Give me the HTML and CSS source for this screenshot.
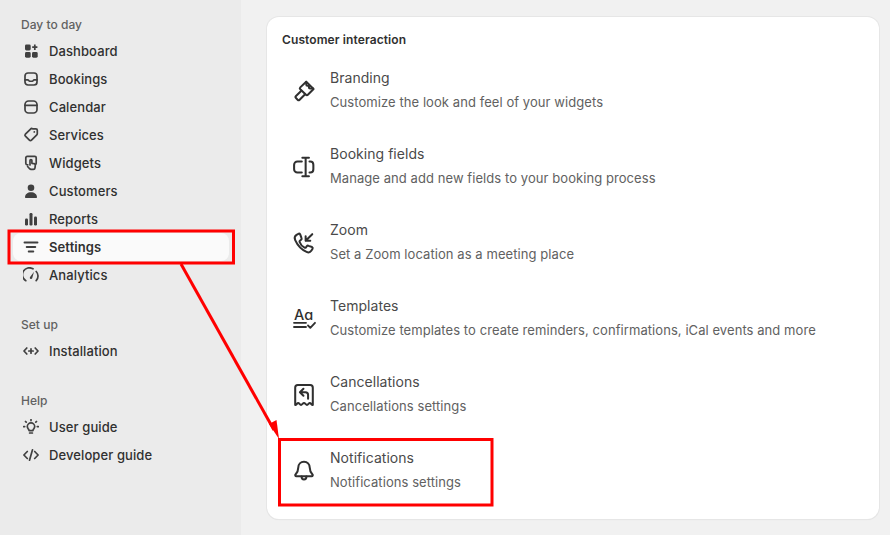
FILE: index.html
```html
<!DOCTYPE html>
<html lang="en">
<head>
<meta charset="utf-8">
<title>Settings</title>
<link rel="stylesheet" href="styles.css">
</head>
<body>
<div class="app">
  <aside class="sidebar">
    <section class="group">
      <h2 class="group-title">Day to day</h2>
      <a class="nav-item"><svg class="nav-icon" viewBox="0 0 16 16"><rect x="2" y="1.500" width="5.700" height="6" rx="1.400" fill="currentColor"/><rect x="2" y="9" width="5.700" height="5.700" rx="1.400" fill="currentColor"/><rect x="9" y="9" width="5.700" height="5.700" rx="1.400" fill="currentColor"/><path d="M11.800 1.500v5.500M9.200 4.200h5.200" stroke="currentColor" stroke-width="1.700" fill="none"/></svg>Dashboard</a>
      <a class="nav-item"><svg class="nav-icon" viewBox="0 0 16 16"><rect x="2" y="2" width="12" height="12" rx="3" class="line"/><path d="M2 8.800h2.800c.6 0 1 .9 1.400 1.200.5.300 3.100.3 3.600 0 .4-.3.800-1.200 1.400-1.200H14" class="line"/></svg>Bookings</a>
      <a class="nav-item"><svg class="nav-icon" viewBox="0 0 16 16"><rect x="2" y="2" width="12" height="12" rx="3.600" class="line"/><path d="M2 6.300h12" class="line"/></svg>Calendar</a>
      <a class="nav-item"><svg class="nav-icon" viewBox="0 0 16 16"><path d="M9.500 1.800h3.400c.8 0 1.400.6 1.400 1.400v3.400c0 .5-.2.900-.5 1.200l-5.300 5.400c-.6.600-1.500.6-2.100 0l-4-4c-.6-.6-.6-1.500 0-2.100l5.400-5.300c.3-.3.300-.4.700-.4z" class="line"/><circle cx="11.300" cy="4.900" r=".9" fill="currentColor"/></svg>Services</a>
      <a class="nav-item"><svg class="nav-icon" viewBox="0 0 16 16"><path d="M4.800 9.800H4.300c-.9 0-1.500-.6-1.500-1.500V2.800c0-.8.600-1.400 1.400-1.400h7.600c.8 0 1.400.6 1.400 1.400v5.500c0 .5-.2.800-.5 1" class="line"/><path d="M7 10V5.500c0-1.200 1.900-1.200 1.900 0v2.800l2.200.4c.9.200 1.300.8 1.200 1.600l-.3 2.500c-.1.800-.8 1.500-1.600 1.500H8c-.6 0-1-.2-1.400-.6l-2-2.200" class="line"/></svg>Widgets</a>
      <a class="nav-item"><svg class="nav-icon" viewBox="0 0 16 16"><circle cx="8" cy="4.800" r="3.300" fill="currentColor"/><path d="M2 14.300c0-3 2.600-5 6-5s6 2 6 5c0 .4-.3.700-.7.700H2.700c-.4 0-.7-.3-.7-.7z" fill="currentColor"/></svg>Customers</a>
      <a class="nav-item"><svg class="nav-icon" viewBox="0 0 16 16"><rect x="2" y="7.500" width="3" height="7" rx="1.200" fill="currentColor"/><rect x="6.500" y="2" width="3" height="12.500" rx="1.200" fill="currentColor"/><rect x="11" y="5.500" width="3" height="9" rx="1.200" fill="currentColor"/></svg>Reports</a>
      <a class="nav-item is-active"><svg class="nav-icon" viewBox="0 0 16 16"><path d="M1.500 3.500h13M3.700 8h8.600M5.700 12.500h4.600" class="line thick"/></svg>Settings</a>
      <a class="nav-item"><svg class="nav-icon" viewBox="0 0 16 16"><path d="M2.800 13.700A6.700 6.700 0 0 1 10 1.800M13.200 4.500a6.700 6.700 0 0 1 0 9.200" class="line"/><path d="M6.900 10.300 11 4.700 9.200 11.200a1.200 1.200 0 0 1-2.300-.9z" fill="currentColor"/></svg>Analytics</a>
    </section>
    <section class="group">
      <h2 class="group-title">Set up</h2>
      <a class="nav-item"><svg class="nav-icon" viewBox="0 0 16 16"><path d="M3.800 5 1 8l2.800 3M12.200 5 15 8l-2.800 3M8 5.800v4.400M5.800 8h4.400" class="line"/></svg>Installation</a>
    </section>
    <section class="group">
      <h2 class="group-title">Help</h2>
      <a class="nav-item"><svg class="nav-icon" viewBox="0 0 16 16"><path d="M6.100 11.600c-.1-1-.4-1.400-1-2-.5-.6-.8-1.200-.8-2a3.700 3.700 0 0 1 7.400 0c0 .8-.3 1.400-.8 2-.6.600-.9 1-1 2z" class="line"/><path d="M6.600 14h2.800M8 .6v1M2.500 2.500l.7.700M13.500 2.500l-.7.700M.7 7.600h1M14.300 7.600h1" class="line"/></svg>User guide</a>
      <a class="nav-item"><svg class="nav-icon" viewBox="0 0 16 16"><path d="M4.300 4.500.9 8l3.400 3.500M11.700 4.500 15.100 8l-3.400 3.500M9.500 2.800 6.500 13.200" class="line"/></svg>Developer guide</a>
    </section>
  </aside>

  <main class="content">
    <div class="card">
      <h1 class="card-title">Customer interaction</h1>
      <a class="row">
        <svg class="row-icon" viewBox="0 0 20 20"><path d="M12 1.500 18.700 8.200 13.500 13.400c-.5.500-1.200.5-1.700 0L6.600 8.400c-.5-.5-.5-1.200 0-1.700z" class="line"/><path d="M12 1.800 12.100 4.300c0 .6.400 1 1 1h1.400v1.500c0 .6.400 1 1 1h2.700" class="line"/><path d="M7.600 9.700 2.500 14.800c-.4.400-.4 1 0 1.400l1.900 1.900c.4.400 1 .4 1.400 0l5-5" class="line"/></svg>
        <div class="row-text"><div class="row-name">Branding</div><div class="row-desc">Customize the look and feel of your widgets</div></div>
      </a>
      <a class="row">
        <svg class="row-icon" viewBox="0 0 20 20"><path d="M8 5H4a3 3 0 0 0-3 3v4a3 3 0 0 0 3 3h4M15 5h.7c1.700 0 2.800 1.300 2.800 3v4c0 1.700-1.100 3-2.800 3H15" class="line"/><path d="M8.500 1.500h6M8.500 18.500h6M11.500 1.500v17" class="line"/></svg>
        <div class="row-text"><div class="row-name">Booking fields</div><div class="row-desc">Manage and add new fields to your booking process</div></div>
      </a>
      <a class="row">
        <svg class="row-icon" viewBox="0 0 20 20"><path d="M4.800 1.700 2.900 2.900C1.500 3.900 1.300 5.800 2 7.400c2 4.500 5.700 8.600 10.300 10.700 1.500.7 3.400.4 4.300-1l1.100-1.700c.4-.6.200-1.300-.4-1.700L14.200 12.600c-.6-.3-1.200-.2-1.600.3l-.8 1c-.3.400-.8.500-1.300.3-1.600-.8-3.900-3.400-4.500-5.100-.2-.5 0-1 .4-1.300l1-.8c.5-.4.600-1 .3-1.600L6.500 2.100c-.4-.6-1.100-.8-1.700-.4z" class="line"/><path d="M17.500 2 11.500 8M11.500 3.800V8h4.200" class="line"/></svg>
        <div class="row-text"><div class="row-name">Zoom</div><div class="row-desc">Set a Zoom location as a meeting place</div></div>
      </a>
      <a class="row">
        <svg class="row-icon templates" viewBox="0 0 22 22"><text x="1" y="12" class="aa">Aɑ</text><path d="M1 14.800h12M1 19h12" class="line"/><path d="M15 17.500l2.300 2.300 4.700-5" class="line"/></svg>
        <div class="row-text"><div class="row-name">Templates</div><div class="row-desc">Customize templates to create reminders, confirmations, iCal events and more</div></div>
      </a>
      <a class="row">
        <svg class="row-icon" viewBox="0 0 20 20"><path d="M2 19V3.300C2 1.900 3 1 4.300 1h11.400C17 1 18 1.900 18 3.300V19c-.9.500-1.700-1.800-2.700-1.800-1 0-1.500 1.800-2.600 1.800-1 0-1.700-1.800-2.700-1.800s-1.700 1.800-2.700 1.800c-1.100 0-1.600-1.800-2.600-1.800-1 0-1.800 2.300-2.700 1.800z" class="line"/><path d="M9.500 4.300 6.300 7.500l3.200 3.200M6.500 7.500h4.800c1.600 0 2.400.9 2.400 2.300v3.700" class="line"/></svg>
        <div class="row-text"><div class="row-name">Cancellations</div><div class="row-desc">Cancellations settings</div></div>
      </a>
      <a class="row">
        <svg class="row-icon" viewBox="0 0 20 20"><path d="M10 1.500c-3 0-5.200 2.300-5.200 5.400 0 2.900-.7 4.300-2.500 6.300-.6.700-.2 1.600.7 1.600h14c.9 0 1.300-.9.700-1.600-1.800-2-2.500-3.400-2.500-6.300 0-3.100-2.200-5.400-5.200-5.400z" class="line"/><path d="M7.800 15c0 1.600 1 2.800 2.200 2.800s2.200-1.200 2.200-2.800" class="line"/></svg>
        <div class="row-text"><div class="row-name">Notifications</div><div class="row-desc">Notifications settings</div></div>
      </a>
    </div>
  </main>
</div>

<svg class="annotations" width="890" height="535" viewBox="0 0 890 535">
  <rect x="9" y="231" width="224.500" height="32" class="mark"/>
  <rect x="279.500" y="439.500" width="212.500" height="65.500" class="mark"/>
  <path d="M181 264 274 430" class="mark"/>
  <path d="M279 439 269 424 276.500 420z" class="mark-head"/>
</svg>
</body>
</html>
```
FILE: styles.css
```css
* { box-sizing: border-box; }
html, body { margin: 0; height: 100%; }
body {
  font-family: Inter, "Liberation Sans", sans-serif;
  color: #303030;
  background: #f1f1f1;
  overflow: hidden;
}
.app { display: flex; width: 890px; height: 535px; }
.sidebar {
  width: 241px;
  flex: none;
  background: #ebebeb;
  padding: 15px 12px 0 13px;
}
.group { margin-bottom: 26px; }
.group-title {
  margin: 0 0 2px 8px;
  height: 20px;
  font-size: 12px;
  line-height: 20px;
  font-weight: 500;
  letter-spacing: .03px;
  color: #616161;
}
.nav-item {
  display: flex;
  align-items: center;
  gap: 10px;
  height: 28px;
  padding-left: 10px;
  font-size: 13px;
  font-weight: 500;
  letter-spacing: .1px;
  color: #303030;
  border-radius: 8px;
}
.nav-item.is-active { background: #fafafa; font-weight: 600; }
.nav-icon { width: 16px; height: 16px; flex: none; color: #404040; }
.line {
  fill: none;
  stroke: currentColor;
  stroke-width: 1.700;
  stroke-linecap: round;
  stroke-linejoin: round;
}
.line.thick { stroke-width: 1.900; }
.content { flex: 1; padding: 17px 11px 0 26px; }
.card {
  height: 502px;
  background: #fff;
  border-radius: 12px;
  box-shadow: 0 0 0 1px #e6e6e6, 0 1px 1px rgba(0, 0, 0, .08);
  padding: 15px 14px 0 15px;
}
.card-title {
  margin: 0 0 5px;
  height: 16px;
  font-size: 12px;
  line-height: 16px;
  font-weight: 600;
  letter-spacing: .1px;
  color: #303030;
}
.row {
  display: flex;
  align-items: center;
  gap: 15px;
  height: 76px;
  padding-left: 11px;
}
.row-icon { width: 22px; height: 22px; flex: none; color: #303030; overflow: visible; }
.row-icon .line { stroke-width: 1.850; }
.row-text { display: flex; flex-direction: column; gap: 4px; margin-top: -2px; }
.row-name { font-size: 14px; line-height: 20px; letter-spacing: .04px; color: #4a4a4a; }
.row-desc { font-size: 13px; line-height: 20px; letter-spacing: .07px; color: #616161; }
.aa { font-family: Inter, sans-serif; font-size: 14.500px; font-weight: 500; fill: currentColor; }
.annotations { position: absolute; left: 0; top: 0; pointer-events: none; }
.mark { fill: none; stroke: #f00; stroke-width: 3; }
.mark-head { fill: #f00; }
```
